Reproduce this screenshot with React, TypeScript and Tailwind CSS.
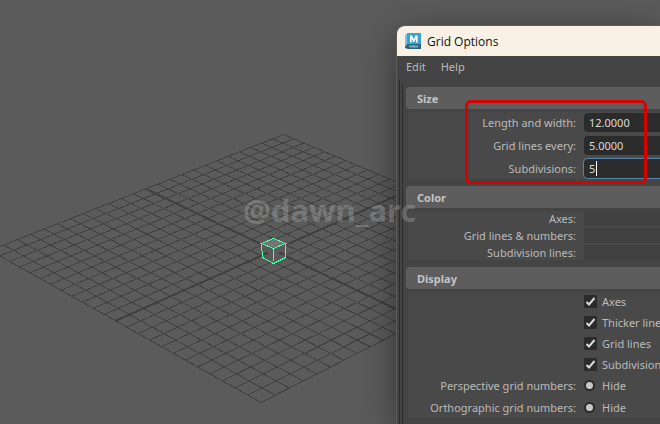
import { useState, type ReactNode } from "react";

type Point = [number, number];

// Projected corners of the ground plane: top, right, bottom, left.
const TOP: Point = [283.5, 134.5];
const RIGHT: Point = [559.4, 250.3];
const BOTTOM: Point = [261, 402.5];
const LEFT: Point = [-10, 250.4];
const CELLS = 24;

// Perspective map from the unit square onto the four corners above.
function project(u: number, v: number): Point {
  const dx1 = RIGHT[0] - BOTTOM[0];
  const dx2 = LEFT[0] - BOTTOM[0];
  const dx3 = TOP[0] - RIGHT[0] + BOTTOM[0] - LEFT[0];
  const dy1 = RIGHT[1] - BOTTOM[1];
  const dy2 = LEFT[1] - BOTTOM[1];
  const dy3 = TOP[1] - RIGHT[1] + BOTTOM[1] - LEFT[1];
  const det = dx1 * dy2 - dx2 * dy1;
  const g = (dx3 * dy2 - dx2 * dy3) / det;
  const h = (dx1 * dy3 - dx3 * dy1) / det;
  const w = g * u + h * v + 1;
  const x = (RIGHT[0] - TOP[0] + g * RIGHT[0]) * u + (LEFT[0] - TOP[0] + h * LEFT[0]) * v + TOP[0];
  const y = (RIGHT[1] - TOP[1] + g * RIGHT[1]) * u + (LEFT[1] - TOP[1] + h * LEFT[1]) * v + TOP[1];
  return [x / w, y / w];
}

function segment(a: Point, b: Point) {
  return `M${a[0].toFixed(2)} ${a[1].toFixed(2)}L${b[0].toFixed(2)} ${b[1].toFixed(2)}`;
}

const steps = Array.from({ length: CELLS + 1 }, (_, i) => i / CELLS);
const gridPath = steps
  .map((t) => segment(project(t, 0), project(t, 1)) + segment(project(0, t), project(1, t)))
  .join("");
const axisPath =
  segment(project(0.5, 0), project(0.5, 1)) + segment(project(0, 0.5), project(1, 0.5));

function Viewport() {
  return (
    <svg
      className="absolute top-0 left-0"
      width="660"
      height="424"
      viewBox="0 0 660 424"
      fill="none"
      shapeRendering="crispEdges"
      role="img"
      aria-label="Perspective view"
    >
      <path d={gridPath} stroke="#414141" />
      <path d={axisPath} stroke="#404040" strokeWidth="2" />
      <path d="M262 243.5L273.5 238.5L285.5 243.5L273.5 248.5Z" fill="#757575" />
      <path d="M262 243.5L273.5 248.5L285.5 243.5V258L273.5 263.5L262 258Z" fill="#5a5a5a" />
      <path d="M262 255L268 252.500M285 255L279 252.500" stroke="#404040" strokeWidth="2" />
      <path
        d="M261.500 243.500L273.500 238.500L285.500 243.500L273.500 248.500ZM261.500 243.500L262.500 257.500L273.500 263.500L285.500 257.500V243.500M273.500 248.500V261"
        stroke="#43ffa3"
      />
    </svg>
  );
}

function AppIcon() {
  return (
    <svg width="16" height="17" viewBox="0 0 16 17" aria-hidden="true">
      <path d="M0 2L3 0V13L0 15Z" fill="#7cc4e0" />
      <rect x="2" y="0" width="14" height="11" fill="#37a5cc" />
      <path d="M2 11H16V16H3L0 15V14Z" fill="#2a6585" />
      <path d="M5 9.500V2.500H7L8.800 6.500L10.600 2.500H12.600V9.500H11V5.500L9.400 9H8.200L6.600 5.500V9.500Z" fill="#fff" />
      <path d="M5 14.500V12.500L6 13.500L7 12.500V14.500M8 14.500L9 12.500L10 14.500M11 12.500V14.500M12 14.500L13 12.500" fill="none" stroke="#c9dde6" strokeWidth="0.800" />
    </svg>
  );
}

function Section({ title, children }: { title: string; children: ReactNode }) {
  return (
    <section className="mb-[7px]">
      <h2 className="flex h-[22px] items-center rounded-l-sm bg-[#5d5d5d] pl-[11px] text-[11px] font-bold text-[#c4c4c4]">
        {title}
      </h2>
      <div className="mt-[3px] ml-0.5 bg-[#494949]">{children}</div>
    </section>
  );
}

const labelClass = "w-[168px] shrink-0 text-right whitespace-nowrap";

function NumberRow({ id, label, initial, active }: { id: string; label: string; initial: string; active?: boolean }) {
  const [value, setValue] = useState(initial);
  return (
    <div className="flex items-center gap-2">
      <label htmlFor={id} className={labelClass}>
        {label}
      </label>
      <div
        className={
          active
            ? "flex h-[19px] min-w-0 flex-1 items-center rounded-l-sm bg-[#2b2b2b] ring-1 ring-[#5285a6]"
            : "flex h-[19px] min-w-0 flex-1 items-center rounded-l-sm bg-[#2b2b2b]"
        }
      >
        <input
          id={id}
          value={value}
          onChange={(e) => setValue(e.target.value)}
          size={1}
          className={
            active
              ? "ml-[5px] h-[15px] w-[7px] bg-transparent text-[#dcdcdc] outline-none"
              : "ml-[5px] h-[15px] w-full bg-transparent text-[#dcdcdc] outline-none"
          }
        />
        {active && <span className="h-[15px] w-px bg-white" />}
      </div>
    </div>
  );
}

function ColorRow({ label }: { label: string }) {
  return (
    <div className="flex h-[15px] items-center gap-2">
      <span className={labelClass}>{label}</span>
      <button type="button" aria-label={label} className="h-full flex-1 bg-[#404040]" />
    </div>
  );
}

function CheckRow({ label }: { label: string }) {
  return (
    <label className="ml-44 flex h-[13px] items-center gap-[5px] whitespace-nowrap">
      <span className="grid shrink-0">
        <input
          type="checkbox"
          defaultChecked
          className="peer col-start-1 row-start-1 size-[13px] appearance-none rounded-[1px] bg-[#2b2b2b]"
        />
        <svg
          className="pointer-events-none invisible col-start-1 row-start-1 peer-checked:visible"
          width="13"
          height="13"
          viewBox="0 0 13 13"
          aria-hidden="true"
        >
          <path d="M2.500 7L5 9.500L10.500 3" fill="none" stroke="#dcdcdc" strokeWidth="2" />
        </svg>
      </span>
      {label}
    </label>
  );
}

function RadioRow({ name, label }: { name: string; label: string }) {
  return (
    <div className="flex h-4 items-center gap-2" role="radiogroup" aria-label={label}>
      <span className={labelClass}>{label}</span>
      <label className="flex items-center gap-[7px]">
        <input
          type="radio"
          name={name}
          defaultChecked
          className="size-[11px] appearance-none rounded-full border-2 border-[#2b2b2b] bg-[#2b2b2b] checked:bg-[#c8c8c8]"
        />
        Hide
      </label>
    </div>
  );
}

export default function App() {
  return (
    <main className="relative h-screen w-full overflow-hidden bg-[#5b5b5b] font-['Noto_Sans','Open_Sans',sans-serif] text-[11px] leading-[15px] text-[#bbbbbb]">
      <Viewport />
      <div
        role="dialog"
        aria-label="Grid Options"
        className="absolute top-[26px] right-0 bottom-0 left-[397px] flex flex-col overflow-hidden rounded-tl-lg bg-[#444444] shadow-[0_0_0_1px_#5c5c5c,0_8px_36px_rgba(0,0,0,0.45)]"
      >
        <header className="flex h-[30px] shrink-0 items-center gap-1.5 bg-[#f9f1e5] pl-2 font-['Open_Sans',sans-serif] text-[12px] text-[#111]">
          <AppIcon />
          <h1>Grid Options</h1>
        </header>
        <nav className="flex h-6 shrink-0 items-start gap-[15px] pt-[3px] pl-[9px]">
          <button type="button">Edit</button>
          <button type="button">Help</button>
        </nav>
        <div className="ml-0.5 min-h-0 flex-1 border-l border-[#2b2b2b]">
          <div className="mt-[3px] ml-0.5 h-full border-l border-[#2b2b2b] pt-1 pl-[3px]">
            <Section title="Size">
              <div className="flex flex-col gap-1 py-px">
                <NumberRow id="length" label="Length and width:" initial="12.0000" />
                <NumberRow id="every" label="Grid lines every:" initial="5.0000" />
                <NumberRow id="subdivisions" label="Subdivisions:" initial="5" active />
              </div>
            </Section>
            <Section title="Color">
              <div className="flex flex-col gap-0.5">
                <ColorRow label="Axes:" />
                <ColorRow label="Grid lines &amp; numbers:" />
                <ColorRow label="Subdivision lines:" />
              </div>
            </Section>
            <Section title="Display">
              <div className="flex flex-col gap-2 pt-[3px]">
                <CheckRow label="Axes" />
                <CheckRow label="Thicker lines for axes" />
                <CheckRow label="Grid lines" />
                <CheckRow label="Subdivision lines" />
              </div>
              <div className="flex flex-col gap-1.5 pt-1.5 pb-[3px]">
                <RadioRow name="perspective" label="Perspective grid numbers:" />
                <RadioRow name="orthographic" label="Orthographic grid numbers:" />
              </div>
            </Section>
          </div>
        </div>
      </div>
      <div className="pointer-events-none absolute top-[100px] left-[465px] h-[84px] w-[182px] rounded-md border-[3px] border-[#d90000]" />
      <p className="pointer-events-none absolute top-[190px] left-[243px] text-[31px] leading-[40px] font-bold text-white/20">
        @dawn_arc
      </p>
    </main>
  );
}
